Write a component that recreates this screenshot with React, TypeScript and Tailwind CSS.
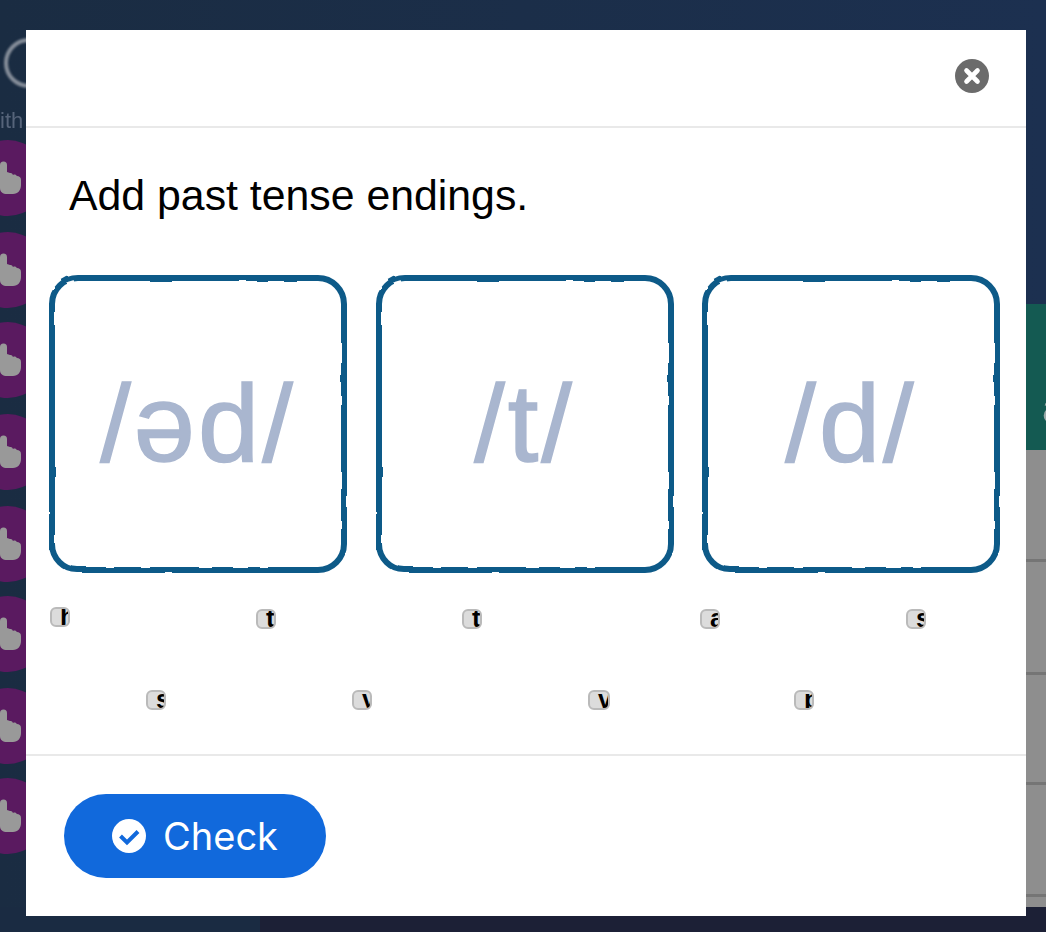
import React from "react";

const hands = [0, 1, 2, 3, 4, 5, 6, 7];
const gaps = ["mb-[16px]", "mb-[14px]", "mb-[16px]", "mb-[16px]", "mb-[14px]", "mb-[16px]", "mb-[14px]", ""];

function Hand() {
  return (
    <svg width="22" height="34" viewBox="0 0 22 34">
      <path
        d="M0 5a3.5 3.5 0 0 1 7 0v7l3 1c1 0 2 0 3 2 2-1 3 0 4 1 2 0 4 1 4 4v5c0 5-3 9-8 9H7c-4 0-7-2-7-6z"
        fill="#999999"
      />
    </svg>
  );
}

function RoughCard({ label }: { label: string }) {
  return (
    <div className="relative flex h-[298px] w-[298px] items-center justify-center">
      <svg width="298" height="298" viewBox="0 0 298 298" className="absolute inset-0">
        <defs>
          <filter id="rough" x="-5%" y="-5%" width="110%" height="110%">
            <feTurbulence type="fractalNoise" baseFrequency="0.035" numOctaves="2" seed="7" />
            <feDisplacementMap in="SourceGraphic" scale="3" />
            <feGaussianBlur stdDeviation="0.5" />
          </filter>
        </defs>
        <rect x="3" y="3" width="292" height="292" rx="26" fill="none" stroke="#115a88" strokeWidth="6" filter="url(#rough)" />
      </svg>
      <span className="relative mt-[-3px] font-['Liberation_Sans',sans-serif] text-[110px] leading-none tracking-[3px] text-[#a9b6cf] blur-[0.5px] [-webkit-text-stroke:1.5px_#a9b6cf]">
        {label}
      </span>
    </div>
  );
}

function Chip({ ch, className }: { ch: string; className: string }) {
  return (
    <div className={"h-[20px] w-[20px] shrink-0 overflow-hidden rounded-[6px] border-2 border-[#bababa] bg-[#dcdcdc] " + className}>
      <span className="ml-[8px] mt-[-1px] block font-['Liberation_Sans',sans-serif] text-[26px] font-bold leading-[16px] text-black">{ch}</span>
    </div>
  );
}

export default function App() {
  return (
    <div className="relative flex h-[932px] w-[1046px] flex-col overflow-hidden bg-gradient-to-r from-[#1a2c42] to-[#1c3050]">
      {/* Page behind the dialog */}
      <div className="flex flex-1 justify-between overflow-hidden">
        <div className="w-[26px] overflow-hidden pt-[38px]">
          <div className="ml-[4px] h-[50px] w-[50px] rounded-full border-[4px] border-[#868e9a] blur-[0.8px]" />
          <div className="mt-[22px] h-[22px] whitespace-nowrap font-['Liberation_Sans',sans-serif] text-[22px] leading-[22px] text-[#56647a] blur-[0.6px]">
            ith
          </div>
          <div className="mt-[8px]">
            {hands.map((i) => (
              <div key={i} className={"ml-[-30px] flex h-[76px] w-[76px] items-center rounded-full bg-[#5a1a60] pl-[30px] " + gaps[i]}>
                <div className="mt-[-2px] flex w-[22px] shrink-0"><Hand /></div>
              </div>
            ))}
          </div>
        </div>
        <div className="w-[20px] pt-[304px]">
          <div className="flex h-[146px] flex-col justify-center overflow-hidden bg-[#145a52] font-['Liberation_Sans',sans-serif] text-[40px] leading-[62px] text-[#9aa9a8]">
            <span className="ml-[18px] blur-[0.5px]">S</span>
            <span className="ml-[16px] blur-[0.5px]">a</span>
          </div>
          <div className="h-[112px] border-b-[3px] border-[#757575] bg-[#8e8e8e]" />
          <div className="h-[113px] border-b-[3px] border-[#757575] bg-[#8e8e8e]" />
          <div className="h-[110px] border-b-[3px] border-[#757575] bg-[#8e8e8e]" />
          <div className="h-[112px] border-b-[3px] border-[#757575] bg-[#8e8e8e]" />
          <div className="h-[10px] bg-[#8e8e8e]" />
        </div>
      </div>
      <div className="flex h-[25px] shrink-0">
        <div className="w-[260px] bg-[#1a2b42]" />
        <div className="flex-1 bg-[#1c2036]" />
      </div>

      {/* Dialog */}
      <div className="absolute left-[26px] top-[30px] flex h-[886px] w-[1000px] flex-col bg-white">
        <div className="flex h-[98px] shrink-0 items-start justify-end border-b-2 border-[#e9e9e9] pr-[37px] pt-[29px]">
          <svg width="34" height="34" viewBox="0 0 34 34">
            <circle cx="17" cy="17" r="17" fill="#6b6b6b" />
            <path d="M11.5 11.5l11 11M22.5 11.5l-11 11" stroke="#fff" strokeWidth="4.6" strokeLinecap="round" />
          </svg>
        </div>
        <h1 className="ml-[43px] mt-[42px] font-['Liberation_Sans',sans-serif] text-[42.8px] font-normal leading-[50px] text-black">
          Add past tense endings.
        </h1>
        <div className="ml-[23px] mt-[55px] flex gap-[28.5px]">
          <RoughCard label="/əd/" />
          <RoughCard label="/t/" />
          <RoughCard label="/d/" />
        </div>
        <div className="ml-[24px] mt-[34px] flex h-[24px] items-start">
          <Chip ch="h" className="" />
          <Chip ch="t" className="ml-[186px] mt-[2px]" />
          <Chip ch="t" className="ml-[186px] mt-[2px]" />
          <Chip ch="a" className="ml-[218px] mt-[2px]" />
          <Chip ch="s" className="ml-[186px] mt-[2px]" />
        </div>
        <div className="ml-[120px] mt-[59px] flex h-[24px] items-start">
          <Chip ch="s" className="" />
          <Chip ch="v" className="ml-[186px]" />
          <Chip ch="v" className="ml-[216px] w-[22px]" />
          <Chip ch="p" className="ml-[184px]" />
        </div>
        <div className="mt-[40px] flex flex-1 items-start border-t-2 border-[#e9e9e9] pl-[38px] pt-[38px]">
          <button className="flex h-[84px] w-[262px] items-center rounded-full bg-[#1169dc] pl-[48px] font-['Inter',sans-serif] text-[38px] text-white">
            <svg width="34" height="34" viewBox="0 0 34 34" className="mr-[17px] shrink-0">
              <circle cx="17" cy="17" r="17" fill="#fff" />
              <path d="M8.5 17l6.5 6.5L26 12.5" fill="none" stroke="#1169dc" strokeWidth="4" />
            </svg>
            Check
          </button>
        </div>
      </div>
    </div>
  );
}
